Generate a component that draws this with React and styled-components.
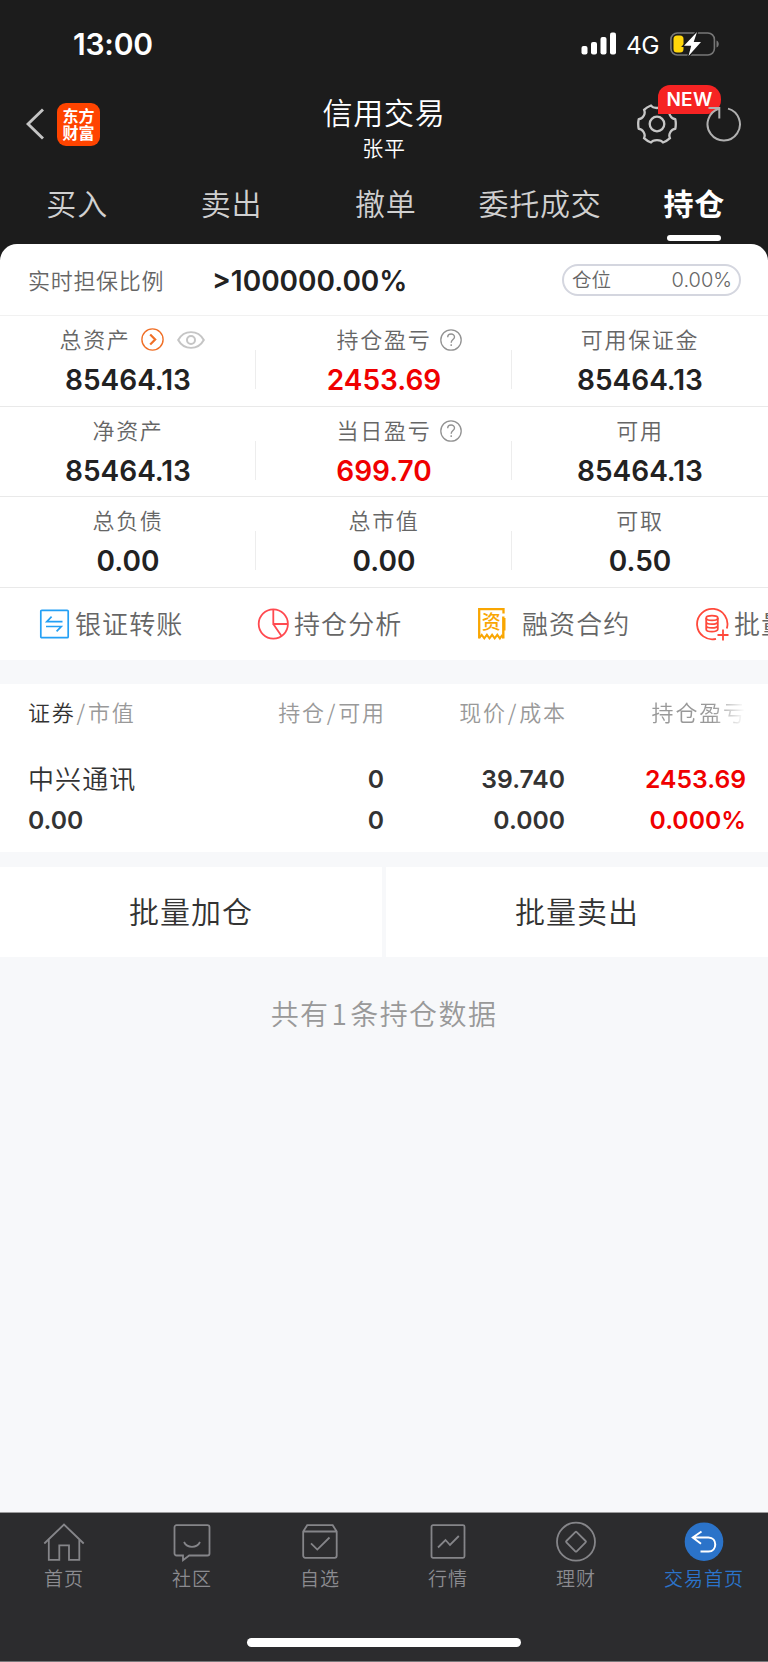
import React, { useState } from "react";
import styled, { createGlobalStyle } from "styled-components";

const cjk = `"Noto Sans CJK SC", "Noto Sans", sans-serif`;
const latin = `Inter, "Noto Sans CJK SC", sans-serif`;

const GlobalStyle = createGlobalStyle`
    * {
        box-sizing: border-box;
    }
    body {
        margin: 0;
        background: #f7f8fa;
        font-family: ${cjk};
        font-weight: 350;
    }
    svg {
        display: block;
        flex: none;
    }
`;

const Screen = styled.div`
    display: flex;
    flex-direction: column;
    width: 768px;
    height: 1662px;
    overflow: hidden;
    background: #f7f8fa;
    white-space: nowrap;
`;

const Header = styled.header`
    height: 260px;
    flex: none;
    background: #1c1c1c;
    color: #fff;
`;

const StatusBar = styled.div`
    display: flex;
    align-items: center;
    justify-content: space-between;
    height: 87px;
    padding: 0 49px 0 73px;
    font-family: ${latin};
`;

const Clock = styled.span`
    font-size: 30px;
    font-weight: 600;
    line-height: 36px;
    letter-spacing: -0.2px;
`;

const StatusIcons = styled.div`
    display: flex;
    align-items: center;
    gap: 9px;
`;

const Network = styled.span`
    font-size: 24.5px;
    font-weight: 400;
    line-height: 30px;
    margin-top: 2px;
    width: 35px;
    letter-spacing: -0.5px;
`;

const NavBar = styled.div`
    display: grid;
    grid-template-columns: 1fr auto 1fr;
    height: 83px;
    padding: 0 26px;
`;

const NavLeft = styled.div`
    display: flex;
    align-items: center;
    gap: 13px;
    height: 74px;
`;

const Logo = styled.div`
    width: 43px;
    height: 43px;
    padding: 4px 0 0 5.5px;
    border-radius: 9px;
    background: #ff4400;
    font-size: 16px;
    font-weight: 700;
    line-height: 17px;
`;

const NavTitle = styled.div`
    display: flex;
    flex-direction: column;
    align-items: center;
    padding-top: 2px;
`;

const Title = styled.span`
    font-size: 30px;
    line-height: 44px;
    letter-spacing: 0.8px;
`;

const Subtitle = styled.span`
    margin-top: -1px;
    font-size: 21px;
    line-height: 31px;
    letter-spacing: 0.8px;
`;

const NavRight = styled.div`
    display: flex;
    align-items: center;
    justify-content: flex-end;
    gap: 29px;
    height: 74px;
`;

const GearBox = styled.div`
    position: relative;
`;

const NewBadge = styled.span`
    position: absolute;
    left: 21px;
    top: -19px;
    width: 63px;
    height: 29px;
    border-radius: 12px 14px 14px 0;
    background: #f62323;
    color: #fff;
    font-family: ${latin};
    font-size: 19px;
    font-weight: 600;
    line-height: 29px;
    letter-spacing: 0.3px;
    text-align: center;
`;

const RefreshBox = styled.div`
    position: relative;
`;

const Tabs = styled.nav`
    display: grid;
    grid-template-columns: repeat(5, 154.3px);
    height: 74px;
`;

const Tab = styled.div`
    display: flex;
    flex-direction: column;
    align-items: center;
    justify-content: space-between;
    height: 71px;
    padding-top: 10px;
    color: ${({ $active }) => ($active ? "#fff" : "#d0d0d0")};
    font-size: 30px;
    font-weight: ${({ $active }) => ($active ? 600 : 350)};
    line-height: 44px;
    letter-spacing: 0.8px;
    cursor: pointer;
`;

const TabLine = styled.i`
    width: 54px;
    height: 6px;
    border-radius: 3px;
    background: #fff;
`;

const Card = styled.section`
    flex: none;
    height: 416px;
    margin-top: -16px;
    border-radius: 17px 17px 0 0;
    background: #fff;
    overflow: hidden;
`;

const RatioRow = styled.div`
    display: flex;
    align-items: center;
    height: 72px;
    padding: 2px 27px 0 28px;
    border-bottom: 1px solid #f1f1f1;
`;

const RatioLabel = styled.span`
    width: 184px;
    padding-bottom: 3px;
    color: #666;
    font-size: 22px;
    line-height: 32px;
    letter-spacing: 0.7px;
`;

const RatioValue = styled.span`
    flex: 1;
    color: #222;
    font-family: ${latin};
    font-size: 28px;
    font-weight: 600;
    line-height: 34px;
`;

const Pill = styled.div`
    display: flex;
    align-items: center;
    justify-content: space-between;
    width: 179px;
    height: 32px;
    margin-bottom: 2px;
    padding: 0 7px 2px 8px;
    border: 2px solid #d4d6df;
    border-radius: 16px;
    color: #666;
    font-size: 19.5px;
    line-height: 28px;
`;

const PillValue = styled.span`
    font-family: ${latin};
    font-size: 20px;
    padding-top: 2px;
`;

const StatRow = styled.div`
    display: grid;
    grid-template-columns: repeat(3, 256px);
    height: ${({ $height }) => $height}px;
    border-bottom: 1px solid #e9e9e9;
`;

const Stat = styled.div`
    display: flex;
    flex-direction: column;
    align-items: center;
    background: linear-gradient(#ededed, #ededed) right 34px / 1px 39px no-repeat;
    &:last-child {
        background: none;
    }
`;

const StatLabel = styled.div`
    display: flex;
    align-items: center;
    height: 47px;
    margin-left: ${({ $shift }) => $shift || 0}px;
    color: #666;
    font-size: 22px;
    letter-spacing: 1.7px;
`;

const StatText = styled.span`
    line-height: 32px;
    padding-bottom: 3px;
`;

const StatValue = styled.span`
    color: ${({ $red }) => ($red ? "#f00000" : "#222")};
    font-family: ${latin};
    font-size: 28px;
    font-weight: 600;
    line-height: 34px;
`;

const HelpIcon = styled.svg`
    margin: 0 -31px 0 9px;
`;

const ArrowIcon = styled.svg`
    margin-left: 10px;
`;

const EyeIcon = styled.svg`
    margin-left: 13px;
`;

const Actions = styled.div`
    display: flex;
    height: 72px;
    padding-left: 38px;
    overflow: hidden;
`;

const Action = styled.div`
    display: flex;
    align-items: center;
    flex: none;
    width: 219px;
    gap: ${({ $gap }) => $gap}px;
    color: #666;
    font-size: 26px;
    letter-spacing: 1.1px;
`;

const ActionText = styled.span`
    line-height: 38px;
    padding-bottom: 2px;
`;

const Holdings = styled.section`
    flex: none;
    height: 168px;
    margin-top: 24px;
    padding: 0 22px 0 28px;
    background: #fff;
`;

const HoldingsLine = styled.div`
    display: grid;
    grid-template-columns: 180px 176px 181px 181px;
    align-items: center;
    height: ${({ $height }) => $height}px;
    text-align: right;
`;

const HeadRow = styled(HoldingsLine)`
    color: #999;
    font-size: 22px;
    line-height: 32px;
    letter-spacing: 1.8px;
    padding-bottom: 20px;
`;

const HeadCell = styled.span`
    margin-right: -1.8px;
    text-align: ${({ $left }) => ($left ? "left" : "right")};
`;

const FadeCell = styled(HeadCell)`
    padding-right: 1px;
    mask-image: linear-gradient(90deg, #000 148px, transparent 180px);
`;

const Strong = styled.b`
    color: #333;
    font-weight: 350;
`;

const Slash = styled.span`
    padding: 0 1px;
`;

const StockName = styled.span`
    padding-bottom: 2px;
    color: #333;
    font-size: 26px;
    line-height: 38px;
    letter-spacing: 1.1px;
    text-align: left;
`;

const Num = styled.span`
    color: ${({ $red }) => ($red ? "#f00000" : "#333")};
    font-family: ${latin};
    font-size: 24.7px;
    font-weight: 600;
    line-height: 32px;
    text-align: ${({ $left }) => ($left ? "left" : "right")};
`;

const BatchButtons = styled.div`
    display: grid;
    grid-template-columns: 382px 382px;
    gap: 4px;
    flex: none;
    height: 90px;
    margin-top: 15px;
`;

const BatchButton = styled.div`
    display: flex;
    align-items: center;
    justify-content: center;
    padding-bottom: 4px;
    background: #fff;
    color: #333;
    font-size: 30px;
    letter-spacing: 1px;
`;

const Summary = styled.p`
    flex: 1;
    margin: 35px 0 0;
    color: #999;
    font-size: 28px;
    line-height: 42px;
    letter-spacing: 1.4px;
    text-align: center;
`;

const Count = styled.span`
    padding: 0 2px;
`;

const BottomBar = styled.footer`
    display: flex;
    flex-direction: column;
    flex: none;
    align-items: center;
    height: 150px;
    border-top: 1px solid #9b9b9c;
    border-bottom: 1px solid #77777a;
    background: #2c2c2e;
`;

const BottomTabs = styled.div`
    display: grid;
    grid-template-columns: repeat(6, 128px);
    height: 125px;
`;

const BottomTab = styled.div`
    display: flex;
    flex-direction: column;
    align-items: center;
    padding-top: 8px;
    color: ${({ $active }) => ($active ? "#2b73c9" : "#8b8b90")};
    font-size: 19px;
    line-height: 28px;
    letter-spacing: 1px;
    gap: 1px;
`;

const HomeIndicator = styled.i`
    width: 274px;
    height: 9px;
    border-radius: 5px;
    background: #fff;
`;

const TABS = ["买入", "卖出", "撤单", "委托成交", "持仓"];

const STATS = [
    [
        { label: "总资产", value: "85464.13", extra: "asset" },
        { label: "持仓盈亏", value: "2453.69", extra: "help", red: true },
        { label: "可用保证金", value: "85464.13" },
    ],
    [
        { label: "净资产", value: "85464.13" },
        { label: "当日盈亏", value: "699.70", extra: "help", red: true },
        { label: "可用", value: "85464.13" },
    ],
    [
        { label: "总负债", value: "0.00" },
        { label: "总市值", value: "0.00" },
        { label: "可取", value: "0.50" },
    ],
];

const Signal = () => (
    <svg width="36" height="23" viewBox="0 0 36 23" fill="#fff">
        <rect x="0.5" y="14" width="6" height="8.5" rx="2" />
        <rect x="10" y="10" width="6" height="12.5" rx="2" />
        <rect x="19.5" y="5" width="6" height="17.5" rx="2" />
        <rect x="29" y="0.5" width="6" height="22" rx="2" />
    </svg>
);

const Battery = () => (
    <svg width="49" height="24" viewBox="0 0 49 24">
        <rect x="0.9" y="1" width="43.5" height="22" rx="6.5" fill="none" stroke="#777" strokeWidth="1.6" />
        <path d="M46.5 8.5v7c3-1 3-6 0-7z" fill="#777" />
        <rect x="3.5" y="3.5" width="10" height="17" rx="3.5" fill="#ffd60a" />
        <path d="M27 0 14 13.7h7.2L18.500 24 31 10h-7.300z" fill="#fff" stroke="#1c1c1c" strokeWidth="2.5" />
        <path d="M27 0 14 13.700h7.200L18.500 24 31 10h-7.300z" fill="#fff" />
    </svg>
);

const Gear = () => (
    <svg width="40" height="40" viewBox="0 0 40 40" fill="none" stroke="#c6c6c6" strokeWidth="2.3">
        <path d="M14 1.500C16 4.800 24 4.800 26 1.500Q30 3 33 5.800C31 9.500 34 15 38.300 15.200Q39.300 20 38.300 24.800C34 25 31 30.500 33 34.200Q30 37 26 38.500C24 35.200 16 35.200 14 38.500Q10 37 7 34.200C9 30.500 6 25 1.700 24.800Q.7 20 1.700 15.200C6 15 9 9.500 7 5.800Q10 3 14 1.500z" strokeLinejoin="round" />
        <circle cx="20" cy="20" r="7.300" />
    </svg>
);

const Refresh = () => (
    <svg width="36" height="36" viewBox="0 0 36 36" fill="none" stroke="#b0b0b0" strokeWidth="2">
        <path d="M22 2.600A16.200 16.200 0 1 1 12.800 2.800M2.500 2.100h10.800v10.500" />
    </svg>
);

const Help = () => (
    <HelpIcon width="22" height="22" viewBox="0 0 22 22" fill="none" stroke="#929292">
        <circle cx="11" cy="11" r="10.200" strokeWidth="1.300" />
        <path d="M7.700 8.200c0-4.200 6.800-4.100 6.800-.2 0 2.500-3.300 2.600-3.300 5.700M11.200 15.200v1.700" strokeWidth="1.400" />
    </HelpIcon>
);

const AssetIcons = () => (
    <>
        <ArrowIcon width="23" height="23" viewBox="0 0 23 23" fill="none" stroke="#f07028">
            <circle cx="11.500" cy="11.500" r="10.600" strokeWidth="1.400" />
            <path d="m9.200 6.500 5 5-5 5" strokeWidth="2.200" />
        </ArrowIcon>
        <EyeIcon width="28" height="20" viewBox="0 0 28 20" fill="none" stroke="#c5c5c5" strokeWidth="2">
            <path d="M1.200 10C7-.8 21-.8 26.800 10 21 20.800 7 20.800 1.200 10z" transform="translate(0 .3) scale(1 .97)" />
            <circle cx="14" cy="10" r="4" />
        </EyeIcon>
    </>
);

const TransferIcon = () => (
    <svg width="32" height="32" viewBox="0 0 32 32" fill="none" stroke="#24a0f5" strokeWidth="1.700">
        <rect x="2.800" y="2.300" width="27.400" height="27.400" rx="1" />
        <path d="M24.500 13.700H8.800l4.800-5M8 18.500h15.200l-4.600 4.800" />
    </svg>
);

const PieIcon = () => (
    <svg width="32" height="32" viewBox="0 0 32 32" fill="none" stroke="#ff4a50" strokeWidth="1.800">
        <circle cx="16.300" cy="16" r="14.600" />
        <path d="M16.300 1.400V16h14.600M16.300 16l8.200 12" />
    </svg>
);

const ContractIcon = () => (
    <svg width="32" height="34" viewBox="0 0 32 34" fill="none" stroke="#f9a602" strokeWidth="2.300">
        <path d="M27.500 6.500V2.200H3.200v29.300" />
        <path d="M3.200 31l2.500-3.200 2.600 3.600 2.600-3.600 2.600 3.600 2.600-3.600 2.600 3.600 2.600-3.600 2.600 3.600 1.800-2.600 1.800 2" strokeWidth="2" />
        <path d="M27.300 31.500V9.500" strokeWidth="2.400" />
        <path d="M28.300 11v12.500" strokeWidth="2.400" />
        <text x="15.300" y="21.800" textAnchor="middle" fill="#f9a602" stroke="none" fontSize="19" fontWeight="500" letterSpacing="0">资</text>
    </svg>
);

const BatchIcon = () => (
    <svg width="34" height="34" viewBox="0 0 34 34" fill="none" stroke="#ff493b" strokeWidth="1.800">
        <path d="M31.800 21.500A15.200 15.200 0 1 0 21 31.800" />
        <ellipse cx="17" cy="11" rx="5.800" ry="2.400" />
        <path d="M11.200 11v11.200c0 3.200 11.600 3.200 11.600 0V11M11.200 14.800c0 3.200 11.600 3.200 11.600 0M11.200 18.500c0 3.200 11.600 3.200 11.600 0M28 22.500v11M22.500 28h11" />
    </svg>
);

const BottomIcon = ({ children }) => (
    <svg width="42" height="42" viewBox="0 0 42 42" fill="none" stroke="#858589" strokeWidth="1.800">{children}</svg>
);

const BOTTOM_TABS = [
    {
        label: "首页",
        icon: <path d="M1.300 22.500 21 3.500l19.700 19M5.800 18.500v20.300h10.500V24.300h9.700v14.500h10.300V18.500" />,
    },
    {
        label: "社区",
        icon: <path d="M5.500 4.200h31a2 2 0 0 1 2 2v26.300a2 2 0 0 1-2 2H18.200l-6.200 4.700v-4.700H5.500a2 2 0 0 1-2-2V6.200a2 2 0 0 1 2-2zM13 21c3.200 6.500 12.800 6.500 16 0" />,
    },
    {
        label: "自选",
        icon: <path d="m4.200 10.500 4-6.300h25.500l4 6.300v24.300a2 2 0 0 1-2 2H6.200a2 2 0 0 1-2-2zM4.200 10.500h33.500M12 22.300l6.300 6.300L30.500 16.500" />,
    },
    {
        label: "行情",
        icon: <path d="M6 4.200h30a1.500 1.500 0 0 1 1.500 1.500v29.600a1.500 1.500 0 0 1-1.500 1.500H6a1.500 1.500 0 0 1-1.500-1.500V5.700A1.500 1.500 0 0 1 6 4.200zM11 26.500l7.500-7.500 4.500 5L31.800 15" />,
    },
    {
        label: "理财",
        icon: <><circle cx="21" cy="20.700" r="19" /><rect x="13.700" y="13.400" width="14.600" height="14.600" rx="1" transform="rotate(45 21 20.700)" /></>,
    },
    {
        label: "交易首页",
        icon: <><circle cx="21" cy="20.700" r="19.300" fill="#2b73c9" stroke="none" /><path d="M18.500 10.500 9.800 16.500l8.200 6.300M10 16.500h15.500c9 0 9 14 0 14H17.500" stroke="#fff" strokeWidth="2" /></>,
    },
];

const App = () => {
    const [tab, setTab] = useState("持仓");

    return (
        <>
            <GlobalStyle />
            <Screen>
                <Header>
                    <StatusBar>
                        <Clock>13:00</Clock>
                        <StatusIcons>
                            <Signal />
                            <Network>4G</Network>
                            <Battery />
                        </StatusIcons>
                    </StatusBar>
                    <NavBar>
                        <NavLeft>
                            <svg width="18" height="34" viewBox="0 0 18 34" fill="none" stroke="#c4c4c4" strokeWidth="2.900">
                                <path d="M17 2.500 2 17l15 14.500" />
                            </svg>
                            <Logo>东方<br />财富</Logo>
                        </NavLeft>
                        <NavTitle>
                            <Title>信用交易</Title>
                            <Subtitle>张平</Subtitle>
                        </NavTitle>
                        <NavRight>
                            <GearBox>
                                <Gear />
                                <NewBadge>NEW</NewBadge>
                            </GearBox>
                            <RefreshBox>
                                <Refresh />
                            </RefreshBox>
                        </NavRight>
                    </NavBar>
                    <Tabs>
                        {TABS.map(name => (
                            <Tab key={name} $active={tab === name} onClick={() => setTab(name)}>
                                {name}
                                {tab === name && <TabLine />}
                            </Tab>
                        ))}
                    </Tabs>
                </Header>
                <Card>
                    <RatioRow>
                        <RatioLabel>实时担保比例</RatioLabel>
                        <RatioValue>&gt;100000.00%</RatioValue>
                        <Pill>
                            <span>仓位</span>
                            <PillValue>0.00%</PillValue>
                        </Pill>
                    </RatioRow>
                    {STATS.map((row, i) => (
                        <StatRow key={i} $height={i === 1 ? 90 : 91}>
                            {row.map(({ label, value, extra, red }) => (
                                <Stat key={label}>
                                    <StatLabel $shift={extra === "asset" ? 8 : 0}>
                                        <StatText>{label}</StatText>
                                        {extra === "asset" && <AssetIcons />}
                                        {extra === "help" && <Help />}
                                    </StatLabel>
                                    <StatValue $red={red}>{value}</StatValue>
                                </Stat>
                            ))}
                        </StatRow>
                    ))}
                    <Actions>
                        <Action $gap={5}><TransferIcon /><ActionText>银证转账</ActionText></Action>
                        <Action $gap={5}><PieIcon /><ActionText>持仓分析</ActionText></Action>
                        <Action $gap={14}><ContractIcon /><ActionText>融资合约</ActionText></Action>
                        <Action $gap={5}><BatchIcon /><ActionText>批量加仓</ActionText></Action>
                    </Actions>
                </Card>
                <Holdings>
                    <HeadRow $height={74}>
                        <HeadCell $left><Strong>证券</Strong><Slash>/</Slash>市值</HeadCell>
                        <HeadCell>持仓<Slash>/</Slash>可用</HeadCell>
                        <HeadCell>现价<Slash>/</Slash>成本</HeadCell>
                        <FadeCell>持仓盈亏</FadeCell>
                    </HeadRow>
                    <HoldingsLine $height={42}>
                        <StockName>中兴通讯</StockName>
                        <Num>0</Num>
                        <Num>39.740</Num>
                        <Num $red>2453.69</Num>
                    </HoldingsLine>
                    <HoldingsLine $height={40}>
                        <Num $left>0.00</Num>
                        <Num>0</Num>
                        <Num>0.000</Num>
                        <Num $red>0.000%</Num>
                    </HoldingsLine>
                </Holdings>
                <BatchButtons>
                    <BatchButton>批量加仓</BatchButton>
                    <BatchButton>批量卖出</BatchButton>
                </BatchButtons>
                <Summary>共有<Count>1</Count>条持仓数据</Summary>
                <BottomBar>
                    <BottomTabs>
                        {BOTTOM_TABS.map(({ label, icon }, i) => (
                            <BottomTab key={label} $active={i === 5}>
                                <BottomIcon>{icon}</BottomIcon>
                                {label}
                            </BottomTab>
                        ))}
                    </BottomTabs>
                    <HomeIndicator />
                </BottomBar>
            </Screen>
        </>
    );
};

export default App;
